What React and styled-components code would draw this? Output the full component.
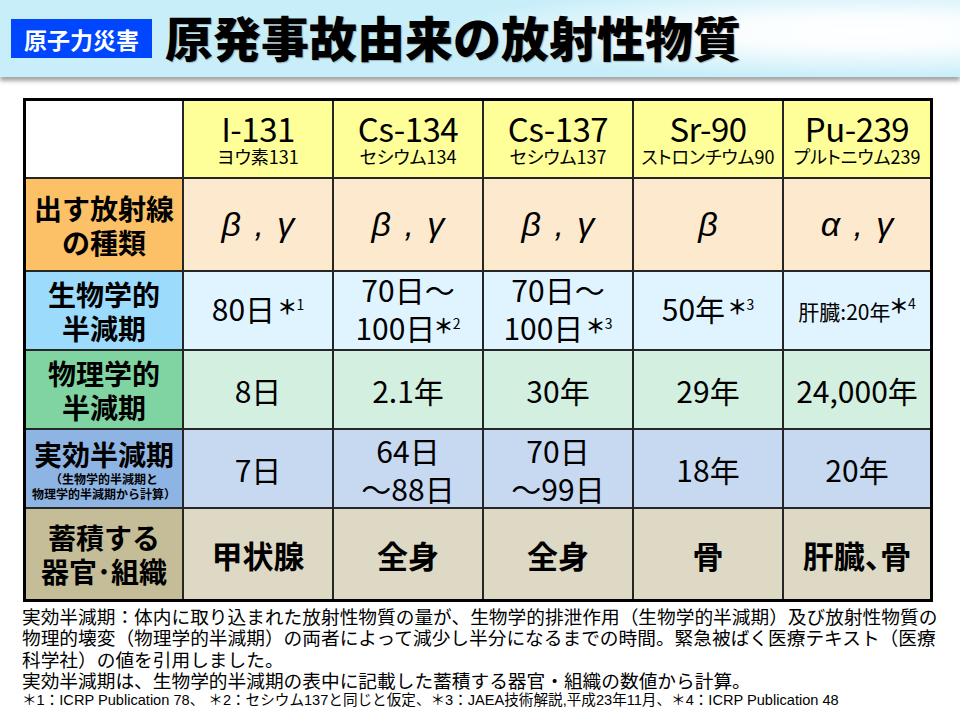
import React from 'react'
import styled, { createGlobalStyle } from 'styled-components'

const GlobalStyle = createGlobalStyle`
  body {
    margin: 0;
    background: #fff;
    font-family: "Noto Sans CJK JP", sans-serif;
    color: #000;
  }
`

const Page = styled.div`
  width: 960px;
  height: 720px;
  overflow: hidden;
  background: #fff;
`

const TitleBar = styled.header`
  position: relative;
  z-index: 1;
  height: 77px;
  display: flex;
  align-items: center;
  gap: 13px;
  padding-left: 11px;
  background:
    radial-gradient(ellipse 430px 46px at 870px 32px, #ffffff 0%, rgba(255, 255, 255, 0.9) 35%, rgba(255, 255, 255, 0) 100%),
    #c8eef9;
  box-shadow: 0 4px 4px rgba(0, 0, 0, 0.35);
`

const Badge = styled.div`
  height: 39px;
  padding: 0 13px;
  display: flex;
  align-items: center;
  background: #0046ff;
  color: #fff;
  font-size: 23px;
  font-weight: 700;
`

const Title = styled.h1`
  margin: -5px 0 0;
  font-size: 48px;
  font-weight: 900;
  line-height: 1;
  text-shadow: 1px 1px 1px rgba(0, 0, 0, 0.25);
`

const Table = styled.div`
  display: grid;
  grid-template-columns: 156px repeat(4, 148px) 146px;
  grid-template-rows: 76px 91px 77px 77px 77px 90px;
  gap: 2px;
  width: max-content;
  margin: 21px 0 0 23px;
  background: #262626;
  border: 3px solid #000;
`

const Cell = styled.div`
  display: flex;
  flex-direction: column;
  align-items: center;
  justify-content: center;
  text-align: center;
  background: ${p => p.$bg || '#fff'};
  white-space: nowrap;
`

const RowLabel = styled(Cell)`
  font-size: 28px;
  font-weight: 700;
  line-height: 34px;
`

const LabelNote = styled.span`
  display: block;
  font-size: 12px;
  line-height: 15px;
  font-weight: 700;
`

const Isotope = styled.div`
  font-size: 33px;
  line-height: 34px;
  letter-spacing: -0.5px;
`

const Kana = styled.div`
  font-size: 18px;
  line-height: 22px;
  font-feature-settings: "palt";
`

const Value = styled(Cell)`
  font-size: ${p => p.$size || 30}px;
  line-height: 38px;
  font-feature-settings: "palt";
`

const Greek = styled(Cell)`
  font-family: "Liberation Sans", sans-serif;
  font-style: italic;
  font-size: 34px;
  word-spacing: 4px;
`

const Organ = styled(Cell)`
  font-size: 31px;
  font-weight: 700;
  font-feature-settings: "palt";
`

const Note = styled.span`
  position: relative;
  top: -6px;
  margin-left: ${p => (p.$tight ? 0 : 4)}px;
  font-size: 20px;
  font-weight: 700;
  sup {
    font-size: 14px;
    font-weight: 400;
    vertical-align: 5px;
    margin-left: 1px;
  }
`

const Notes = styled.div`
  padding: 3px 0 0 22px;
`

const NoteLine = styled.div`
  font-size: 18.7px;
  line-height: 21.3px;
  white-space: nowrap;
`

const RefLine = styled.div`
  font-family: "Liberation Sans", "Noto Sans CJK JP", sans-serif;
  font-size: 14.6px;
  line-height: 21px;
  white-space: nowrap;
`

const isotopes = [
  ['I-131', 'ヨウ素131'],
  ['Cs-134', 'セシウム134'],
  ['Cs-137', 'セシウム137'],
  ['Sr-90', 'ストロンチウム90'],
  ['Pu-239', 'プルトニウム239'],
]

const colors = {
  head: '#ffff99',
  ray: ['#fcc066', '#fde9cd'],
  bio: ['#9cdbfc', '#e0f4ff'],
  phys: ['#7fd4a2', '#d3efe0'],
  eff: ['#8eb4e3', '#c6d9f1'],
  organ: ['#c4bd97', '#ddd9c4'],
}

const Marked = ({ text, n, tight }) => (
  <span>
    {text}
    <Note $tight={tight}>＊<sup>{n}</sup></Note>
  </span>
)

const App = () => {
  return (
    <Page>
      <GlobalStyle />
      <TitleBar>
        <Badge>原子力災害</Badge>
        <Title>原発事故由来の放射性物質</Title>
      </TitleBar>

      <Table>
        <Cell />
        {isotopes.map(([name, kana]) => (
          <Cell key={name} $bg={colors.head}>
            <Isotope>{name}</Isotope>
            <Kana>{kana}</Kana>
          </Cell>
        ))}

        <RowLabel $bg={colors.ray[0]}>出す放射線<br />の種類</RowLabel>
        {['β , γ', 'β , γ', 'β , γ', 'β', 'α , γ'].map((g, i) => (
          <Greek key={i} $bg={colors.ray[1]}>{g}</Greek>
        ))}

        <RowLabel $bg={colors.bio[0]}>生物学的<br />半減期</RowLabel>
        <Value $bg={colors.bio[1]}><Marked text="80日" n="1" /></Value>
        <Value $bg={colors.bio[1]}>
          <span>70日～</span>
          <Marked text="100日" n="2" tight />
        </Value>
        <Value $bg={colors.bio[1]}>
          <span>70日～</span>
          <Marked text="100日" n="3" />
        </Value>
        <Value $bg={colors.bio[1]}><Marked text="50年" n="3" /></Value>
        <Value $bg={colors.bio[1]} $size={21}><Marked text="肝臓:20年" n="4" tight /></Value>

        <RowLabel $bg={colors.phys[0]}>物理学的<br />半減期</RowLabel>
        {['8日', '2.1年', '30年', '29年', '24,000年'].map((v, i) => (
          <Value key={i} $bg={colors.phys[1]}>{v}</Value>
        ))}

        <RowLabel $bg={colors.eff[0]}>
          実効半減期
          <LabelNote>（生物学的半減期と<br />物理学的半減期から計算）</LabelNote>
        </RowLabel>
        <Value $bg={colors.eff[1]}>7日</Value>
        <Value $bg={colors.eff[1]}><span>64日</span><span>～88日</span></Value>
        <Value $bg={colors.eff[1]}><span>70日</span><span>～99日</span></Value>
        <Value $bg={colors.eff[1]}>18年</Value>
        <Value $bg={colors.eff[1]}>20年</Value>

        <RowLabel $bg={colors.organ[0]}>蓄積する<br />器官･組織</RowLabel>
        {['甲状腺', '全身', '全身', '骨', '肝臓、骨'].map((v, i) => (
          <Organ key={i} $bg={colors.organ[1]}>{v}</Organ>
        ))}
      </Table>

      <Notes>
        <NoteLine>実効半減期：体内に取り込まれた放射性物質の量が、生物学的排泄作用（生物学的半減期）及び放射性物質の</NoteLine>
        <NoteLine>物理的壊変（物理学的半減期）の両者によって減少し半分になるまでの時間。緊急被ばく医療テキスト（医療</NoteLine>
        <NoteLine>科学社）の値を引用しました。</NoteLine>
        <NoteLine>実効半減期は、生物学的半減期の表中に記載した蓄積する器官・組織の数値から計算。</NoteLine>
        <RefLine>＊1：ICRP Publication 78、 ＊2：セシウム137と同じと仮定、＊3：JAEA技術解説,平成23年11月、＊4：ICRP Publication 48</RefLine>
      </Notes>
    </Page>
  )
}

export default App
